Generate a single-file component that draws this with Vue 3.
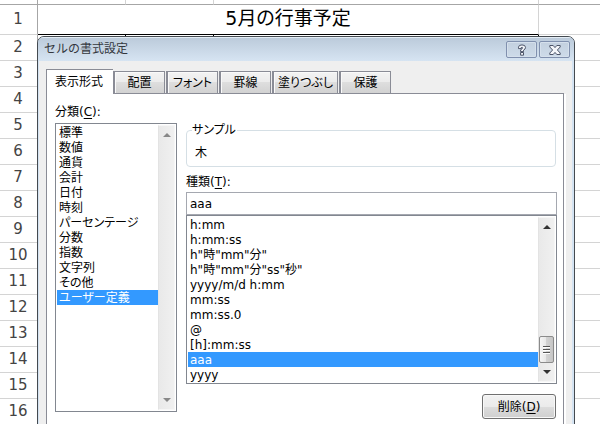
<script setup>
import { ref } from 'vue'

const rows = Array.from({ length: 16 }, (_, i) => i + 1)
const tabs = ['表示形式', '配置', 'フォント', '罫線', '塗りつぶし', '保護']
const activeTab = ref('表示形式')
const categories = ['標準', '数値', '通貨', '会計', '日付', '時刻', 'パーセンテージ', '分数', '指数', '文字列', 'その他', 'ユーザー定義']
const category = ref('ユーザー定義')
const formats = ['h:mm', 'h:mm:ss', 'h"時"mm"分"', 'h"時"mm"分"ss"秒"', 'yyyy/m/d h:mm', 'mm:ss', 'mm:ss.0', '@', '[h]:mm:ss', 'aaa', 'yyyy']
const format = ref('aaa')
</script>

<template>
  <main class="screen">
    <table class="sheet">
      <thead>
        <tr>
          <th class="num"></th>
          <td class="col-a"></td>
          <td class="col-b"></td>
          <td class="col-c"></td>
          <td class="rest"></td>
        </tr>
      </thead>
      <tbody>
        <tr v-for="n in rows" :key="n" :class="{ first: n === 1 }">
          <th class="num" scope="row">{{ n }}</th>
          <template v-if="n === 1">
            <td class="heading" colspan="3">5月の行事予定</td>
            <td></td>
          </template>
          <template v-else>
            <td :class="{ lined: n === 2 }"></td>
            <td :class="{ lined: n === 2 }"></td>
            <td :class="{ lined: n === 2 }"></td>
            <td></td>
          </template>
        </tr>
      </tbody>
    </table>

    <section class="dialog" role="dialog" aria-labelledby="dialog-title">
      <header class="titlebar">
        <h1 id="dialog-title">セルの書式設定</h1>
        <button class="caption" type="button" aria-label="ヘルプ">
          <svg width="12" height="12" viewBox="0 0 12 12">
            <path d="M2.5 4.6V3.2Q2.5 .9 6 .9T9.5 3.4Q9.5 5.2 7.5 6.2V7.6H4.6V5.8Q6.6 4.8 6.6 3.8T5.2 3.6V4.6Z" fill="#f4f6fa" stroke="#4c5468" stroke-width="1" />
            <path d="M4.6 8.5H7.5V11.2H4.6Z" fill="#f4f6fa" stroke="#4c5468" stroke-width="1" />
          </svg>
        </button>
        <button class="caption" type="button" aria-label="閉じる">
          <svg width="12" height="12" viewBox="0 0 12 12">
            <path d="M.8 1.5H4.2L6 3.6 7.8 1.5H11.2V3L8.4 6 11.2 9V10.5H7.8L6 8.4 4.2 10.5H.8V9L3.6 6 .8 3Z" fill="#f4f6fa" stroke="#4c5468" stroke-width="1" />
          </svg>
        </button>
      </header>

      <div class="body">
        <div class="tabs" role="tablist">
          <button
            v-for="tab in tabs"
            :key="tab"
            type="button"
            role="tab"
            :aria-selected="tab === activeTab"
            :class="['tab', { active: tab === activeTab }]"
            @click="activeTab = tab"
          >{{ tab }}</button>
        </div>

        <div class="panel" role="tabpanel">
          <div class="categories">
            <label for="category">分類(<u>C</u>):</label>
            <div class="listbox tall">
              <select id="category" v-model="category" size="12">
                <option v-for="c in categories" :key="c" :value="c">{{ c }}</option>
              </select>
              <div class="scrollbar muted" aria-hidden="true">
                <svg width="8" height="5" viewBox="0 0 8 5"><path d="M0 5L4 1 8 5Z" /></svg>
                <svg width="8" height="5" viewBox="0 0 8 5"><path d="M0 0L4 4 8 0Z" /></svg>
              </div>
            </div>
          </div>

          <div class="details">
            <fieldset class="sample">
              <legend>サンプル</legend>
              <output>木</output>
            </fieldset>
            <label for="format">種類(<u>T</u>):</label>
            <input id="format" v-model="format" type="text" />
            <div class="listbox">
              <select v-model="format" size="11" aria-label="種類の一覧">
                <option v-for="f in formats" :key="f" :value="f">{{ f }}</option>
              </select>
              <div class="scrollbar" aria-hidden="true">
                <svg width="8" height="5" viewBox="0 0 8 5"><path d="M0 5L4 1 8 5Z" /></svg>
                <span class="thumb"><i></i><i></i><i></i></span>
                <svg width="8" height="5" viewBox="0 0 8 5"><path d="M0 0L4 4 8 0Z" /></svg>
              </div>
            </div>
            <button class="delete" type="button">削除(<u>D</u>)</button>
          </div>
        </div>
      </div>
    </section>
  </main>
</template>

<style>
body {
  margin: 0;
  background: #fff;
}
</style>

<style scoped>
* {
  box-sizing: border-box;
}

.screen {
  position: relative;
  height: 100vh;
  overflow: hidden;
  font: 12px/15px "DejaVu Sans", "Noto Sans CJK JP", sans-serif;
  font-feature-settings: "palt";
  color: #000;
}

.sheet {
  width: 100%;
  table-layout: fixed;
  border-collapse: separate;
  border-spacing: 0;
}

.sheet td,
.sheet th {
  padding: 0;
  border: 0 solid #d4d4d4;
  border-width: 0 1px 1px 0;
}

.sheet td:last-child {
  border-right-width: 0;
}

.sheet thead td,
.sheet thead th {
  height: 5px;
  border-bottom-color: #a6a6a6;
}

.sheet tbody tr {
  height: 26px;
}

.sheet tbody tr.first {
  height: 30px;
}

.sheet .num {
  width: 38px;
  border-right-color: #a6a6a6;
  font-size: 15px;
  line-height: 20px;
  font-weight: 400;
  color: #444;
}

.sheet tbody .num {
  padding: 0 1px 2px 0;
}

.col-a,
.col-b {
  width: 88px;
}

.col-c {
  width: 325px;
}

.sheet .heading {
  padding-bottom: 4px;
  border-bottom-color: #000;
  font-size: 19px;
  line-height: 24px;
  text-align: center;
}

.sheet .lined {
  border-right-color: #000;
}

.dialog {
  position: absolute;
  top: 36px;
  left: 37px;
  right: 25px;
  border: 1px solid #444a50;
  border-radius: 7px 7px 0 0;
  background: #d4e3f2;
  overflow: hidden;
}

.titlebar {
  display: flex;
  align-items: center;
  gap: 2px;
  height: 24px;
  padding: 0 4px 0 6px;
  border-top: 1px solid #e4edf5;
  background: linear-gradient(#bccbdb, #d6e4f2);
}

.titlebar h1 {
  flex: 1;
  margin: 0;
  font-size: 12px;
  font-weight: 400;
  font-feature-settings: normal;
  color: #33373d;
}

.caption {
  display: flex;
  align-items: center;
  justify-content: center;
  width: 31px;
  height: 17px;
  padding: 0;
  border: 1px solid #8090ae;
  border-radius: 2px;
  background: linear-gradient(#c3d0df, #cddbe9);
  box-shadow: inset 0 0 0 1px #d5e0ec;
}

.body {
  margin: 0 2px 0 1px;
  padding: 8px 8px 8px 7px;
  background: #efefef;
}

.tabs {
  display: flex;
  align-items: flex-end;
  gap: 1px;
  background: linear-gradient(#8a8c96, #8a8c96) bottom / 100% 1px no-repeat;
}

.tab {
  min-width: 52px;
  height: 23px;
  padding: 1px 4px 0;
  border: 1px solid #8a8c96;
  border-width: 1px 1px 1px 2px;
  background: linear-gradient(#f3f3f3, #ebebeb 50%, #dedede 50%, #d2d2d2);
  box-shadow: inset 1px 1px 0 #fafafa;
  font: inherit;
  font-feature-settings: inherit;
  color: inherit;
  white-space: nowrap;
}

.tab.active {
  height: 25px;
  padding: 0 10px 0 8px;
  border-width: 1px 0 0 1px;
  background: #fff;
  box-shadow: none;
}

.tab.active + .tab {
  margin-left: -1px;
}

.panel {
  display: flex;
  gap: 9px;
  padding: 10px 6px 32px 8px;
  border: 1px solid #8a8c96;
  border-top: 0;
  background: #fff;
  box-shadow: 2px 0 0 #fff;
}

label {
  display: block;
  line-height: 15px;
}

u {
  text-underline-offset: 2px;
}

.categories {
  flex: 0 0 122px;
}

.categories label {
  padding-top: 1px;
  margin-bottom: 3px;
}

.listbox {
  display: flex;
  padding: 1px;
  border: 1px solid #828790;
  background: #fff;
}

.listbox.tall {
  height: 289px;
}

select {
  flex: 1;
  min-width: 0;
  height: 165px;
  padding: 0;
  border: 0;
  border-radius: 0;
  outline: 0;
  background: #fff;
  overflow: hidden;
  font: inherit;
  font-feature-settings: inherit;
  color: #000;
}

.tall select {
  height: 180px;
}

option {
  display: flex;
  align-items: flex-end;
  height: 15px;
  min-height: 15px;
  padding: 0 2px;
  color: #000;
}

option:checked {
  background: #3399ff linear-gradient(#3399ff, #3399ff);
  color: #fff;
  -webkit-text-fill-color: #fff;
}

.scrollbar {
  display: flex;
  flex-direction: column;
  align-items: center;
  justify-content: space-between;
  width: 17px;
  padding: 6px 0;
  border: 1px solid #f6f6f6;
  border-left-color: #e3e3e3;
  background: linear-gradient(90deg, #e9e9e9, #f0f0f0);
}

.scrollbar svg {
  fill: #333;
}

.scrollbar.muted svg {
  fill: #888;
}

.thumb {
  display: flex;
  flex-direction: column;
  align-items: center;
  justify-content: center;
  gap: 1px;
  width: 15px;
  height: 27px;
  margin-top: auto;
  margin-bottom: 7px;
  border: 1px solid #8b8b8b;
  border-radius: 2px;
  background: linear-gradient(90deg, #f5f5f5, #e6e6e6 50%, #d2d2d2 50%, #c6c6c6);
}

.thumb i {
  width: 7px;
  height: 2px;
  border-bottom: 1px solid #fff;
  background: #555;
}

.details {
  display: flex;
  flex: 1;
  flex-direction: column;
  min-width: 0;
}

.sample {
  min-width: 0;
  margin: 19px 1px 0 0;
  padding: 8px 8px 5px;
  border: 1px solid #d5dfe5;
  border-radius: 4px;
}

.sample legend {
  padding: 0 1px 0 0;
  margin-left: -3px;
}

.sample output {
  display: block;
}

.details label {
  margin: 8px 0 2px;
}

input {
  width: 100%;
  height: 23px;
  padding: 0 3px;
  border: 1px solid #a5a8b0;
  border-radius: 0;
  outline: 0;
  background: #fff;
  font: inherit;
  color: #000;
}

.delete {
  align-self: flex-end;
  width: 74px;
  height: 25px;
  margin: 10px 1px 0 0;
  padding: 1px 0 0;
  border: 1px solid #707070;
  border-radius: 3px;
  background: linear-gradient(#f2f2f2, #ebebeb 50%, #dddddd 50%, #cfcfcf);
  box-shadow: inset 0 0 0 1px #f8f8f8;
  font: inherit;
  color: #000;
}
</style>
